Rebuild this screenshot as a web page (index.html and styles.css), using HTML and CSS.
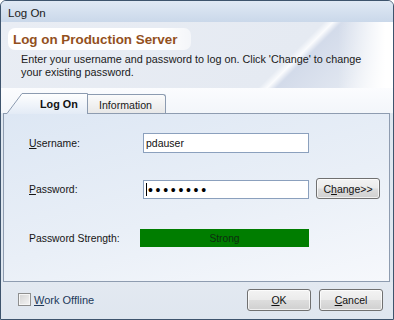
FILE: index.html
```html
<!DOCTYPE html>
<html>
<head>
<meta charset="utf-8">
<title>Log On</title>
<link rel="stylesheet" href="styles.css">
</head>
<body>
<div class="window">
  <div class="titlebar">Log On</div>
  <div class="header">
    <div class="title-box">Log on Production Server</div>
    <div class="desc">Enter your username and password to log on. Click 'Change' to change<br>your existing password.</div>
  </div>
  <div class="tabs-area">
    <div class="tab tab-active">
      <svg class="tab-shape" width="85" height="21" viewBox="0 0 85 21">
        <defs>
          <linearGradient id="tabfill" x1="0" y1="0" x2="0" y2="1">
            <stop offset="0" stop-color="#ffffff"/>
            <stop offset="1" stop-color="#e3ebf6"/>
          </linearGradient>
        </defs>
        <path d="M0 21 L0 20.5 L4 20.5 L19 0.5 L84.5 0.5 L84.5 21 Z" fill="url(#tabfill)" stroke="none"/>
        <path d="M0 20.5 L4 20.5 L19 0.5 L84.5 0.5 L84.5 21" fill="none" stroke="#8c9bb0" stroke-width="1"/>
      </svg>
      <span class="tab-label">Log On</span>
    </div>
    <div class="tab tab-inactive">Information</div>
  </div>
  <div class="panel">
    <div class="row row-user">
      <div class="label"><u>U</u>sername:</div>
      <div class="input">pdauser</div>
    </div>
    <div class="row row-pass">
      <div class="label"><u>P</u>assword:</div>
      <div class="input input-pass"><span class="caret"></span><span class="dots">••••••••</span></div>
      <div class="btn btn-change">C<u>h</u>ange&gt;&gt;</div>
    </div>
    <div class="row row-strength">
      <div class="label label-strength">Password Strength:</div>
      <div class="strength-bar">Strong</div>
    </div>
  </div>
  <div class="footer">
    <div class="checkbox"></div>
    <div class="offline"><u>W</u>ork Offline</div>
    <div class="spacer"></div>
    <div class="btn btn-foot"><u>O</u>K</div>
    <div class="btn btn-foot btn-cancel"><u>C</u>ancel</div>
  </div>
</div>
</body>
</html>
```

FILE: styles.css
```css
html, body {
  margin: 0;
  padding: 0;
  background: #ffffff;
}

body {
  font-family: "Liberation Sans", Arial, sans-serif;
  font-size: 10.5px;
  color: #1a1a1a;
}

u {
  text-decoration: underline;
  text-underline-offset: 1px;
}

.window {
  width: 394px;
  height: 320px;
  box-sizing: border-box;
  border: 1px solid #3e546d;
  border-radius: 6px 6px 0 0;
  display: flex;
  flex-direction: column;
  background: #dfe7f0;
  overflow: hidden;
  box-shadow: inset 0 -1px 0 #c3d3e6;
}

.titlebar {
  height: 21px;
  flex: none;
  box-sizing: border-box;
  display: flex;
  align-items: center;
  padding: 2px 0 0 7px;
  font-size: 11.5px;
  color: #1b1b1b;
  background: linear-gradient(#e0e9f4, #cad8ea);
}

.header {
  height: 66px;
  flex: none;
  box-sizing: border-box;
  padding-top: 6px;
  background:
    linear-gradient(to right, rgba(255,255,255,0) 86%, #ffffff 98%),
    linear-gradient(135deg, #e9edf4 0%, #e5eaf2 70.5%, #fafbfd 72.5%, #d3dbea 74.5%, #e0e6f0 88%, #f4f6fa 100%);
}

.title-box {
  margin-left: 7px;
  width: 183px;
  height: 22px;
  box-sizing: border-box;
  border-radius: 7px;
  background: linear-gradient(to right, #ffffff 82%, rgba(255,255,255,0.55));
  display: flex;
  align-items: center;
  padding-left: 5px;
  font-weight: bold;
  font-size: 13.4px;
  color: #93501d;
  white-space: nowrap;
}

.desc {
  margin: 3px 0 0 20px;
  font-size: 10.8px;
  line-height: 12.5px;
  color: #1a1a1a;
  white-space: nowrap;
}

.tabs-area {
  height: 25px;
  flex: none;
  display: flex;
  align-items: flex-end;
  padding-left: 2px;
  background: linear-gradient(#fbfcfe, #f3f6fa);
  position: relative;
  z-index: 1;
}

.tab {
  box-sizing: border-box;
  white-space: nowrap;
}

.tab-active {
  position: relative;
  width: 85px;
  height: 21px;
  margin-bottom: -1px;
  display: flex;
  align-items: center;
  padding: 1px 0 0 37px;
  font-weight: bold;
  font-size: 10.8px;
  color: #111111;
}

.tab-shape {
  position: absolute;
  left: 0;
  top: 0;
}

.tab-label {
  position: relative;
}

.tab-inactive {
  width: 78px;
  height: 19px;
  border-top: 1px solid #8c9bb0;
  border-right: 1px solid #8c9bb0;
  border-radius: 0 3px 0 0;
  background: linear-gradient(#fbfbfb, #e8e8e8);
  display: flex;
  align-items: center;
  padding: 1px 0 0 11px;
  font-size: 10.6px;
  color: #1a1a1a;
}

.panel {
  height: 169px;
  flex: none;
  box-sizing: border-box;
  margin: 0 3px 0 2px;
  border: 1px solid #8e9cb0;
  background: linear-gradient(165deg, #dde7f4 0%, #e9eff7 55%, #f6f8fc 100%);
  padding-left: 25px;
  display: flex;
  flex-direction: column;
}

.row {
  display: flex;
  align-items: center;
}

.row-user {
  margin-top: 19px;
  height: 20px;
}

.row-pass {
  margin-top: 25px;
  height: 21px;
  align-items: flex-start;
}

.row-strength {
  margin-top: 30px;
  height: 18px;
}

.label {
  width: 114px;
  flex: none;
  font-size: 10.4px;
  color: #151515;
  white-space: nowrap;
}

.row-pass .label {
  align-self: center;
  padding-top: 2px;
}

.label-strength {
  width: 111px;
}

.input {
  width: 166px;
  height: 20px;
  box-sizing: border-box;
  border: 1px solid #8ba0bd;
  background: #ffffff;
  display: flex;
  align-items: center;
  padding-left: 2px;
  font-size: 10.5px;
  color: #111111;
}

.input-pass {
  margin-top: 2px;
  height: 19px;
}

.caret {
  width: 0;
  height: 13px;
  border-left: 1px solid #000000;
}

.dots {
  font-size: 14px;
  letter-spacing: 2.7px;
  margin-left: 1px;
  color: #000000;
  line-height: 1;
}

.btn {
  box-sizing: border-box;
  border: 1px solid #707070;
  border-radius: 3px;
  background: linear-gradient(#f3f3f3 0%, #ebebeb 48%, #dddddd 52%, #d0d0d0 100%);
  box-shadow: inset 0 0 0 1px rgba(255,255,255,0.7);
  display: flex;
  align-items: center;
  justify-content: center;
  font-size: 10.5px;
  color: #111111;
  white-space: nowrap;
}

.btn-change {
  width: 64px;
  height: 21px;
  margin-left: 7px;
}

.strength-bar {
  width: 169px;
  height: 18px;
  background: #007d00;
  display: flex;
  align-items: center;
  justify-content: center;
  font-size: 10.2px;
  color: #0e2e10;
}

.footer {
  flex: 1;
  display: flex;
  align-items: center;
  padding: 0 10px 2px 17px;
  background: linear-gradient(#e3e9f1, #dfe6ef);
}

.checkbox {
  width: 13px;
  height: 13px;
  box-sizing: border-box;
  border: 1px solid #8e8f8f;
  background: linear-gradient(135deg, #d3d3d3, #f4f4f4);
  box-shadow: inset 0 0 0 1px #f6f6f6;
  flex: none;
}

.offline {
  margin-left: 3px;
  font-size: 11px;
  color: #22395a;
}

.spacer {
  flex: 1;
}

.btn-foot {
  width: 64px;
  height: 22px;
}

.btn-cancel {
  margin-left: 8px;
}
```
